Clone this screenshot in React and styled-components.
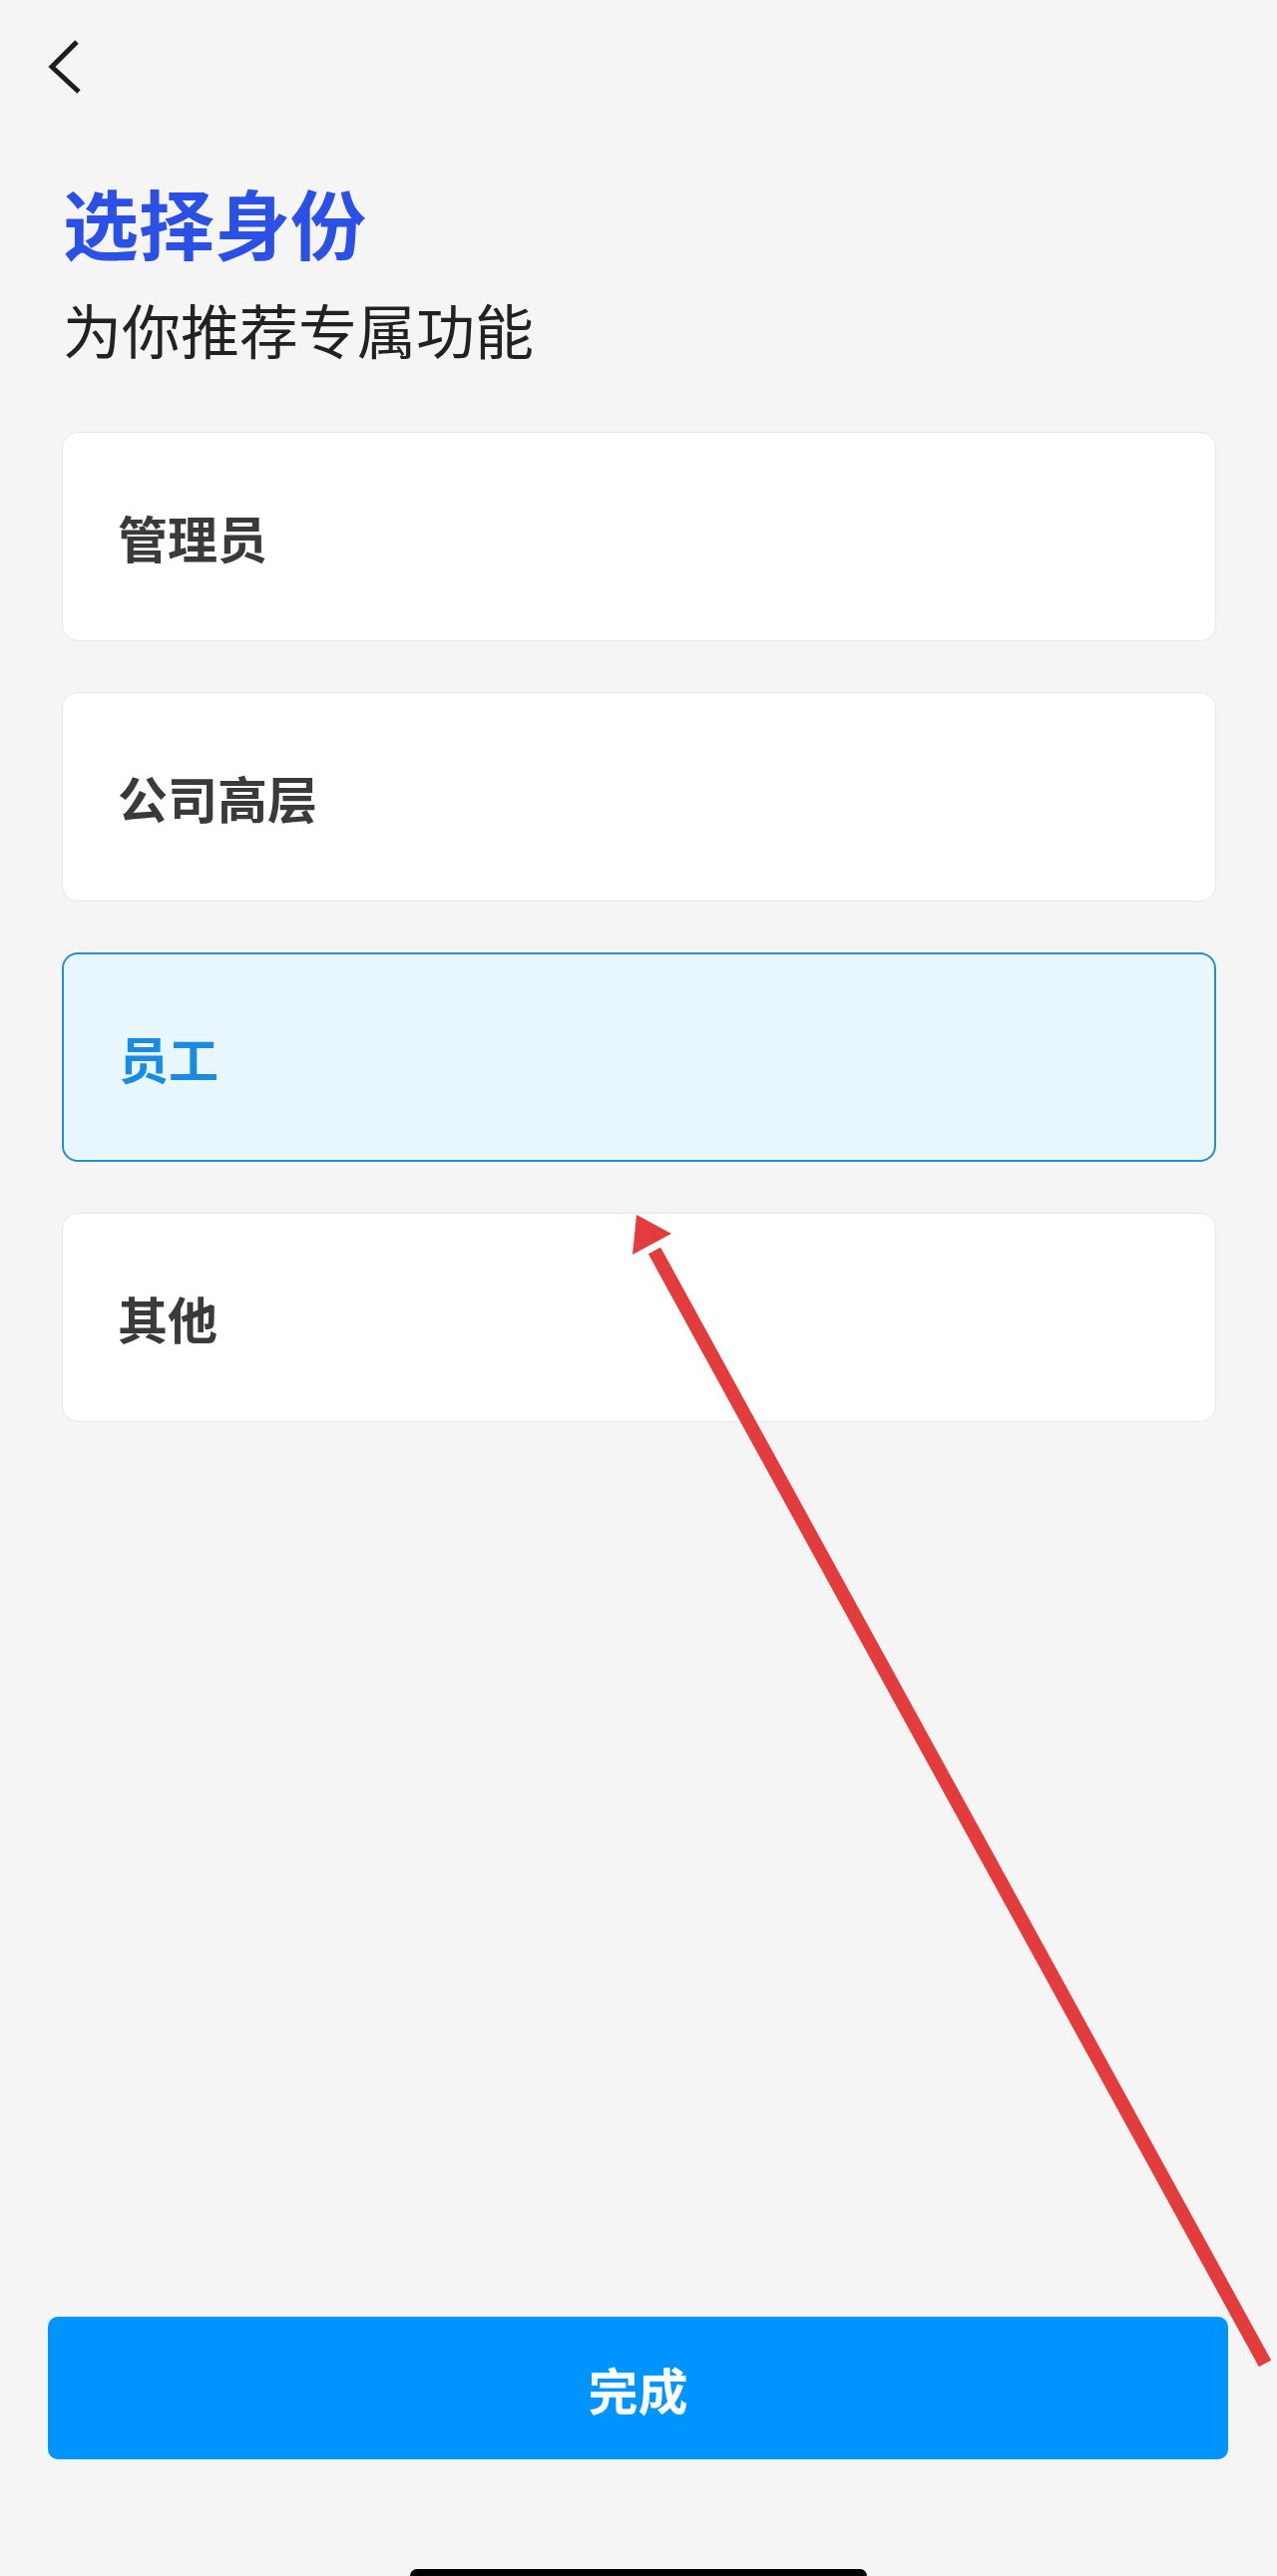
import React, { useState } from 'react';
import styled, { createGlobalStyle } from 'styled-components';

const GlobalStyle = createGlobalStyle`
  html, body {
    margin: 0;
    padding: 0;
    background: #f5f5f6;
  }
  * { box-sizing: border-box; }
`;

// 整页
const Page = styled.div`
  position: relative;
  height: 2583px;
  overflow: hidden;
  display: flex;
  flex-direction: column;
  background: #f5f5f6;
  font-family: "Noto Sans CJK SC", "Noto Sans", sans-serif;
`;

// 顶部返回
const Header = styled.div`
  display: flex;
  align-items: center;
  height: 134px;
  padding-left: 36px;
`;

const BackButton = styled.button`
  display: flex;
  align-items: center;
  justify-content: center;
  width: 60px;
  height: 60px;
  padding: 0;
  border: none;
  background: transparent;
  cursor: pointer;
`;

const Heading = styled.div`
  display: flex;
  flex-direction: column;
  gap: 40px;
  padding: 50px 63px 0;
`;

const Title = styled.h1`
  margin: 0;
  font-size: 76px;
  line-height: 76px;
  font-weight: 700;
  color: #2a50e5;
`;

const Subtitle = styled.p`
  margin: 0;
  font-size: 59px;
  line-height: 59px;
  font-weight: 400;
  color: #222;
`;

// 身份列表
const OptionList = styled.div`
  display: flex;
  flex-direction: column;
  gap: 51px;
  margin-top: 74px;
  padding: 0 61px 0 62px;
`;

const Option = styled.div`
  display: flex;
  align-items: center;
  height: 210px;
  padding-left: 55px;
  border-radius: 16px;
  border: ${p => (p.active ? '2.5px solid #2a8bd5' : '1.5px solid #e7e7e7')};
  background: ${p => (p.active ? '#e8f6fd' : '#ffffff')};
  color: ${p => (p.active ? '#1a8be3' : '#3a3a3a')};
  font-size: 50px;
  font-weight: 700;
  cursor: pointer;
`;

const Spacer = styled.div`
  flex: 1;
`;

const Footer = styled.div`
  display: flex;
  flex-direction: column;
  align-items: center;
  padding: 0 49px 0 48px;
`;

const DoneButton = styled.button`
  width: 100%;
  height: 143px;
  border: none;
  border-radius: 10px;
  background: #0094ff;
  color: #fff;
  font-family: inherit;
  font-size: 50px;
  font-weight: 700;
  cursor: pointer;
`;

const HomeIndicator = styled.div`
  width: 458px;
  height: 14px;
  margin-top: 110px;
  margin-bottom: -7px;
  border-radius: 8px;
  background: #000;
`;

// 标注箭头
const Annotation = styled.svg`
  position: absolute;
  left: 0;
  top: 0;
  width: 1280px;
  height: 2583px;
  pointer-events: none;
`;

const roles = ['管理员', '公司高层', '员工', '其他'];

export default function App() {
  const [selected, setSelected] = useState('员工');

  return (
    <Page>
      <GlobalStyle />
      <Header>
        <BackButton aria-label="返回">
          <svg width="40" height="60" viewBox="0 0 40 60">
            <polyline points="29,9 4,34 31,59" fill="none" stroke="#1e1e1e" strokeWidth="5" transform="translate(2,-4)" />
          </svg>
        </BackButton>
      </Header>
      <Heading>
        <Title>选择身份</Title>
        <Subtitle>为你推荐专属功能</Subtitle>
      </Heading>
      <OptionList>
        {roles.map(r => (
          <Option key={r} active={selected === r} onClick={() => setSelected(r)}>
            {r}
          </Option>
        ))}
      </OptionList>
      <Spacer />
      <Footer>
        <DoneButton>完成</DoneButton>
        <HomeIndicator />
      </Footer>
      <Annotation viewBox="0 0 1280 2583">
        <line x1="1268" y1="2370" x2="656" y2="1254" stroke="#e23c3c" strokeWidth="14" />
        <polygon points="638,1218 673,1237 634,1258" fill="#e23c3c" />
      </Annotation>
    </Page>
  );
}
